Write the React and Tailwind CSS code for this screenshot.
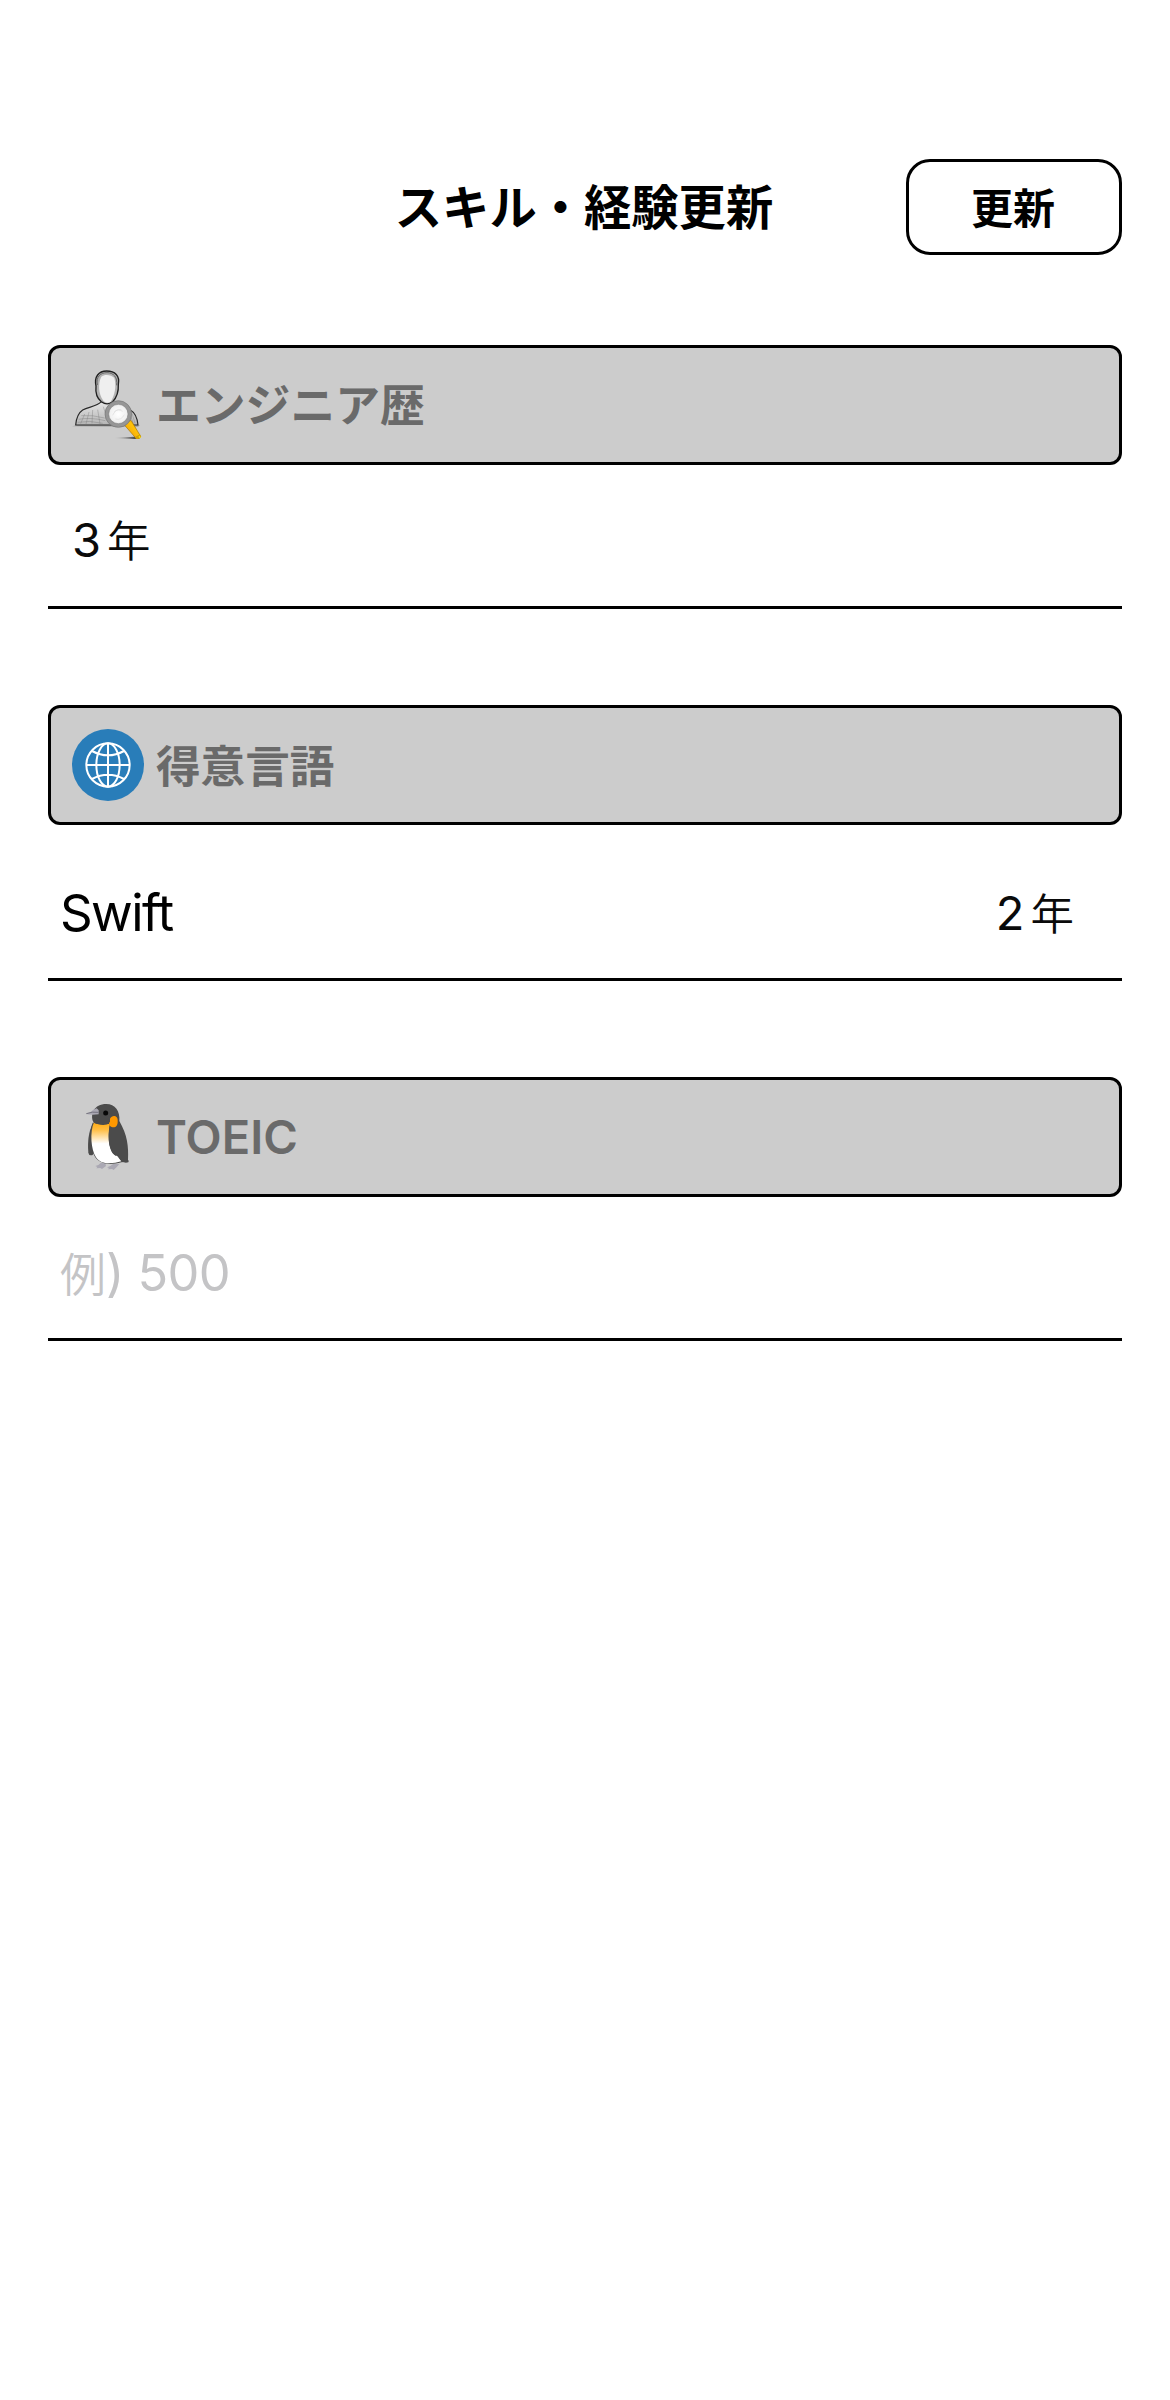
const LATIN = "font-['Inter','Noto_Sans_CJK_JP',sans-serif]";
const JP = "font-['Noto_Sans_CJK_JP',sans-serif]";

function EngineerIcon() {
  return (
    <svg viewBox="18 27 216 216" className="size-[72px] shrink-0">
      <defs>
        <linearGradient id="body" x1="0" y1="0" x2="0" y2="1">
          <stop offset="0" stopColor="#e6e6e6" />
          <stop offset="1" stopColor="#b4b4b4" />
        </linearGradient>
        <radialGradient id="lens">
          <stop offset="0" stopColor="#ffffff" />
          <stop offset="0.7" stopColor="#f1f1f1" />
          <stop offset="1" stopColor="#dedede" />
        </radialGradient>
        <linearGradient id="grip" x1="0" y1="1" x2="1" y2="0">
          <stop offset="0" stopColor="#ec9500" />
          <stop offset="0.6" stopColor="#ffc20a" />
          <stop offset="1" stopColor="#c98200" />
        </linearGradient>
        <linearGradient id="ground" x1="0" x2="1">
          <stop offset="0" stopColor="#555" stopOpacity="0" />
          <stop offset="1" stopColor="#222" />
        </linearGradient>
      </defs>
      <path d="M18 199 L40 194 L222 196 L216 200 Z" fill="#8a8a8a" opacity=".7" />
      <path d="M142 234 L205 230 L222 236 L205 237 Z" fill="url(#ground)" />
      <path d="M29 195 C31 172 38 158 50 150 C68 140 92 140 106 125 L141 125 C150 139 175 141 193 150 C207 158 214 174 216 195 Z" fill="url(#body)" stroke="#2a2a2a" strokeWidth="3.5" strokeLinejoin="round" />
      <path d="M35 187 Q70 180 110 190 M38 178 Q72 171 118 182 M46 167 Q78 164 116 174 M80 150 L78 190 M95 149 L102 192 M112 140 L118 160 M44 191 L56 162 M60 192 L69 156 M198 160 L207 190 M192 162 L202 192" fill="none" stroke="#777" strokeWidth="1.5" opacity=".75" />
      <path d="M106 125 C92 114 88 97 90 78 C84 50 98 33 122 33 C147 33 162 48 157 73 C158 94 153 112 140 125 C130 133 117 133 106 125 Z" fill="#b2b2b2" stroke="#202020" strokeWidth="4" />
      <path d="M94 75 C89 50 104 38 123 38 C143 38 155 52 152 76" fill="none" stroke="#555" strokeWidth="2.5" />
      <path d="M106 50 C116 42 136 44 145 54 C152 80 146 106 134 125 C126 130 117 130 111 121 C98 101 95 72 106 50 Z" fill="#efefef" />
      <path d="M181 188 L195 181 L224 229 Q221 238 210 235 L177 197 Z" fill="url(#grip)" stroke="#a87500" strokeWidth="2" />
      <path d="M207 231 L222 223 L225 231 Q221 239 210 236 Z" fill="#d2a100" />
      <path d="M219 229 L223 233" stroke="#ffe500" strokeWidth="4" />
      <circle cx="157" cy="162" r="34.5" fill="url(#lens)" stroke="#969696" strokeWidth="11" />
      <circle cx="157" cy="162" r="40" fill="none" stroke="#747474" strokeWidth="2" />
      <circle cx="157" cy="162" r="29" fill="none" stroke="#777" strokeWidth="1.5" />
      <path d="M140 166 Q148 146 166 149 M148 177 Q166 182 175 164 M144 157 Q154 144 170 154" fill="none" stroke="#dcdcdc" strokeWidth="2" />
    </svg>
  );
}

function GlobeIcon() {
  return (
    <svg viewBox="96 102 216 216" className="size-[72px] shrink-0">
      <circle cx="204" cy="210" r="108" fill="#297db9" />
      <g fill="none" stroke="#fff" strokeWidth="6">
        <circle cx="204" cy="210" r="65" />
        <ellipse cx="204" cy="210" rx="35" ry="65" />
        <path d="M204 145 V275 M139 210 H269 M156 168 Q204 194 252 168 M156 252 Q204 226 252 252" />
      </g>
    </svg>
  );
}

function PenguinIcon() {
  return (
    <svg viewBox="18 18 216 216" className="size-[72px] shrink-0">
      <defs>
        <linearGradient id="belly" x1="0" y1="0" x2="0" y2="1">
          <stop offset="0" stopColor="#ffab10" />
          <stop offset="0.18" stopColor="#ffbd43" />
          <stop offset="0.52" stopColor="#ffffff" />
        </linearGradient>
      </defs>
      <path d="M104 204 Q98 211 88 213 L94 216 L91 220 L103 219 L108 222 L120 213 L118 205 Z" fill="#aaa8b3" />
      <path d="M141 207 Q133 215 123 217 L129 219 L126 223 L138 222 L143 225 L153 215 L160 207 Z" fill="#aaa8b3" />
      <path d="M78 92 C69 108 64 137 67 173 Q69 184 80 180 L88 160 Z" fill="#4b4b4b" />
      <path d="M80 83 C67 111 73 162 86 184 C101 210 135 210 166 202 L185 200 L158 92 L137 80 Z" fill="#4b4b4b" />
      <path d="M84 82 C102 91 121 85 132 88 C126 113 127 141 132 157 C138 176 144 182 153 182 L166 199 C138 207 105 210 90 187 C75 165 71 111 84 82 Z" fill="url(#belly)" />
      <path d="M81 79 C73 58 83 27 121 27 C147 27 163 49 160 78 C184 120 188 154 186 194 Q190 197 187 202 Q177 206 167 199 Q160 193 157 179 L149 182 C131 171 123 137 132 85 Q115 94 94 87 Q83 86 81 79 Z" fill="#4b4b4b" />
      <path d="M92 40 Q80 44 75 50 L59 56 Q73 61 98 58 L98 46 Z" fill="#aaa8b3" />
      <path d="M61 56 Q79 49 97 52" fill="none" stroke="#565560" strokeWidth="2" />
      <circle cx="119" cy="54" r="7.5" fill="#080808" />
      <path d="M132 71 C139 58 157 62 155 79 C156 93 147 100 137 96 C128 91 127 84 132 80 Z" fill="#ff9800" />
    </svg>
  );
}

function SectionHeader({ icon, children }) {
  return (
    <div className="flex h-[120px] items-center gap-3 rounded-[12px] border-[3px] border-black bg-[#cccccc] pl-[21px] text-[#6a6a6a]">
      {icon}
      {children}
    </div>
  );
}

function Years({ value }) {
  return (
    <span className="flex items-baseline gap-[6px] leading-none text-[#0a0a0a]">
      <span className={`${LATIN} text-[47px] font-[380]`}>{value}</span>
      <span className={`${JP} text-[43.5px] font-[350] leading-none`}>年</span>
    </span>
  );
}

export default function App() {
  return (
    <div className={`${LATIN} h-[2400px] w-full bg-white px-12 pt-[159px] text-black`}>
      <header className="grid h-24 grid-cols-[216px_1fr_216px] items-center">
        <h1 className={`${JP} col-start-2 whitespace-nowrap pb-1 pr-0.5 text-center text-[47.3px] font-bold leading-[60px]`}>スキル・経験更新</h1>
        <button className={`${JP} h-24 rounded-[24px] border-[3px] border-black pb-[3px] pr-0.5 text-[42px] font-bold leading-[60px]`}>更新</button>
      </header>

      <section className="mt-[90px]">
        <SectionHeader icon={<EngineerIcon />}>
          <span className={`${JP} pb-1 text-[44.8px] font-bold leading-[60px]`}>エンジニア歴</span>
        </SectionHeader>
        <div className="flex h-36 items-center border-b-[3px] border-black pl-6 pt-2">
          <Years value="3" />
        </div>
      </section>

      <section className="mt-24">
        <SectionHeader icon={<GlobeIcon />}>
          <span className={`${JP} pb-[3px] text-[44.6px] font-bold leading-[60px]`}>得意言語</span>
        </SectionHeader>
        <div className="flex h-[156px] items-center justify-between border-b-[3px] border-black pl-3 pr-12 pt-[22px]">
          <span className="text-[51px] font-[380] leading-none tracking-[-0.032em]">Swift</span>
          <Years value="2" />
        </div>
      </section>

      <section className="mt-24">
        <SectionHeader icon={<PenguinIcon />}>
          <span className="text-[47px] font-[580] leading-[60px]">TOEIC</span>
        </SectionHeader>
        <div className="flex h-36 items-center border-b-[3px] border-black pl-3 pt-3">
          <span className="flex items-baseline leading-none text-[#c4c4c6]">
            <span className={`${JP} text-[46px] font-[350] leading-none`}>例</span>
            <span className="text-[50.5px] font-[380] tracking-[-0.012em]">) 500</span>
          </span>
        </div>
      </section>
    </div>
  );
}
